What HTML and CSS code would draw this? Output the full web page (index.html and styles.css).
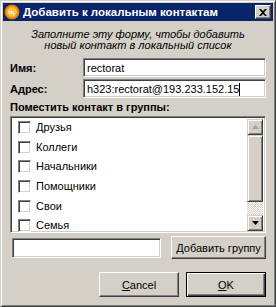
FILE: index.html
```html
<!DOCTYPE html>
<html>
<head>
<title>Добавить к локальным контактам</title>
<link rel="stylesheet" href="styles.css">
</head>
<body>

<div class="window">
  <!-- title bar -->
  <div class="titlebar">
    <svg class="appIcon" width="16" height="16" viewBox="0 0 16 16">
      <circle cx="8" cy="8" r="7.5" fill="#e07800"/>
      <circle cx="8" cy="8" r="6" fill="#f7a21a"/>
      <circle cx="8" cy="8" r="4.5" fill="#fbc24a"/>
      <path d="M4.5 7 l1 3 l1-3 M7.5 7 v3 M9 7 v3 h2" stroke="#fff" stroke-width="0.8" fill="none"/>
    </svg>
    <span class="titleText">Добавить к локальным контактам</span>
    <button class="closeButton">
      <svg width="8" height="7" viewBox="0 0 8 7"><path d="M0 0h2l2 2 2-2h2l-3 3.5 3 3.5h-2l-2-2-2 2h-2l3-3.5z" fill="#000"/></svg>
    </button>
  </div>

  <div class="content">
    <p class="intro">Заполните эту форму, чтобы добавить<br>новый контакт в локальный список</p>

    <div class="fieldRow">
      <label class="fieldLabel">Имя:</label>
      <div class="textbox">rectorat</div>
    </div>
    <div class="fieldRow">
      <label class="fieldLabel">Адрес:</label>
      <div class="textbox">h323:rectorat@193.233.152.15<span class="caret"></span></div>
    </div>

    <div class="groupsLabel">Поместить контакт в группы:</div>

    <div class="listbox">
      <div class="listItems">
        <div class="listItem"><span class="checkbox"></span>Друзья</div>
        <div class="listItem"><span class="checkbox"></span>Коллеги</div>
        <div class="listItem"><span class="checkbox"></span>Начальники</div>
        <div class="listItem"><span class="checkbox"></span>Помощники</div>
        <div class="listItem"><span class="checkbox"></span>Свои</div>
        <div class="listItem"><span class="checkbox"></span>Семья</div>
      </div>
      <div class="scrollbar">
        <div class="scrollButton">
          <svg width="7" height="4" viewBox="0 0 7 4"><path d="M3.5 0 L7 4 H0z" fill="#a0a0a0"/></svg>
        </div>
        <div class="scrollThumb"></div>
        <div class="scrollTrack"></div>
        <div class="scrollButton">
          <svg width="7" height="4" viewBox="0 0 7 4"><path d="M0 0 H7 L3.5 4z" fill="#000"/></svg>
        </div>
      </div>
    </div>

    <div class="addRow">
      <div class="textbox addInput"></div>
      <button class="button addButton">Добавить группу</button>
    </div>

    <div class="dialogButtons">
      <button class="button dialogButton"><u>C</u>ancel</button>
      <button class="button dialogButton defaultButton"><u>O</u>K</button>
    </div>
  </div>
</div>

</body>
</html>
```

FILE: styles.css
```css
:root {
  --face: #d4d0c8;
  --shadow: #808080;
  --dark: #404040;
  --light: #ffffff;
  --title: #0a246a;
}

body {
  margin: 0;
  font-family: "Liberation Sans", Arial, sans-serif;
  font-size: 11px;
  color: #000;
}

.window {
  width: 276px;
  height: 307px;
  box-sizing: border-box;
  background-color: var(--face);
  border: 1px solid;
  border-color: var(--face) var(--dark) var(--dark) var(--face);
  box-shadow: inset 1px 1px var(--light), inset -1px -1px var(--shadow);
  padding: 2px;
  display: flex;
  flex-direction: column;
}

/* title bar */
.titlebar {
  height: 18px;
  background-color: var(--title);
  display: flex;
  align-items: center;
  padding: 0 2px 0 1px;
}

.appIcon {
  flex-shrink: 0;
  margin-right: 3px;
}

.titleText {
  flex-grow: 1;
  color: #fff;
  font-weight: bold;
  font-size: 11.5px;
  white-space: nowrap;
}

.closeButton {
  width: 16px;
  height: 14px;
  padding: 0;
  background-color: var(--face);
  border: 1px solid;
  border-color: var(--light) var(--dark) var(--dark) var(--light);
  box-shadow: inset -1px -1px var(--shadow);
  display: flex;
  align-items: center;
  justify-content: center;
}

.content {
  flex-grow: 1;
  display: flex;
  flex-direction: column;
  padding: 0 7px 0 7px;
}

.intro {
  margin: 8px 0 0 0;
  text-align: center;
  font-style: italic;
  line-height: 11px;
}

/* name / address rows */
.fieldRow {
  display: flex;
  align-items: center;
  margin-top: 2px;
}

.fieldRow:first-of-type {
  margin-top: 7px;
}

.fieldLabel {
  width: 73px;
  font-weight: bold;
}

.textbox {
  flex-grow: 1;
  height: 19px;
  box-sizing: border-box;
  background-color: #fff;
  border: 1px solid;
  border-color: var(--shadow) var(--light) var(--light) var(--shadow);
  box-shadow: inset 1px 1px var(--dark), inset -1px -1px var(--face);
  padding: 2px 3px;
  line-height: 15px;
  white-space: nowrap;
  overflow: hidden;
}

.caret {
  display: inline-block;
  width: 1px;
  height: 13px;
  background-color: #000;
  vertical-align: -3px;
}

.groupsLabel {
  font-weight: bold;
  margin-top: 3px;
  line-height: 13px;
}

/* group list */
.listbox {
  margin-top: 2px;
  height: 117px;
  box-sizing: border-box;
  background-color: #fff;
  border: 1px solid;
  border-color: var(--shadow) var(--light) var(--light) var(--shadow);
  box-shadow: inset 1px 1px var(--dark), inset -1px -1px var(--face);
  padding: 1px 2px 0 2px;
  display: flex;
}

.listItems {
  flex-grow: 1;
  overflow: hidden;
}

.listItem {
  height: 19.6px;
  display: flex;
  align-items: center;
  line-height: 13px;
  padding-left: 5px;
}

.checkbox {
  width: 13px;
  height: 13px;
  box-sizing: border-box;
  border: 1px solid;
  border-color: var(--shadow) var(--light) var(--light) var(--shadow);
  box-shadow: inset 1px 1px var(--dark), inset -1px -1px var(--face);
  background-color: #fff;
  margin-right: 5px;
}

.scrollbar {
  width: 16px;
  display: flex;
  flex-direction: column;
  margin: 1px 0 1px 0;
}

.scrollButton,
.scrollThumb {
  box-sizing: border-box;
  background-color: var(--face);
  border: 1px solid;
  border-color: var(--face) var(--dark) var(--dark) var(--face);
  box-shadow: inset 1px 1px var(--light), inset -1px -1px var(--shadow);
}

.scrollButton {
  height: 16px;
  display: flex;
  align-items: center;
  justify-content: center;
}

.scrollThumb {
  height: 67px;
}

.scrollTrack {
  flex-grow: 1;
  background-color: #eae8e4;
  background-image: repeating-conic-gradient(#fff 0 25%, var(--face) 0 50%);
  background-size: 2px 2px;
}

/* add group row */
.addRow {
  display: flex;
  align-items: center;
  margin-top: 3px;
}

.addInput {
  flex-grow: 0;
  width: 149px;
  height: 20px;
  margin-left: 2px;
}

.button {
  font-family: "Liberation Sans", Arial, sans-serif;
  font-size: 11px;
  color: #000;
  background-color: var(--face);
  border: 1px solid;
  border-color: var(--light) var(--dark) var(--dark) var(--light);
  box-shadow: inset -1px -1px var(--shadow), inset 1px 1px var(--face);
  padding: 0;
}

.addButton {
  margin-left: auto;
  width: 95px;
  height: 23px;
}

.dialogButtons {
  display: flex;
  justify-content: flex-end;
  gap: 7px;
  margin-top: 13px;
}

.dialogButton {
  width: 80px;
  height: 25px;
}

.defaultButton {
  border: 1px solid #000;
  box-shadow: inset 1px 1px var(--light), inset -1px -1px var(--dark), inset -2px -2px var(--shadow);
}
```
